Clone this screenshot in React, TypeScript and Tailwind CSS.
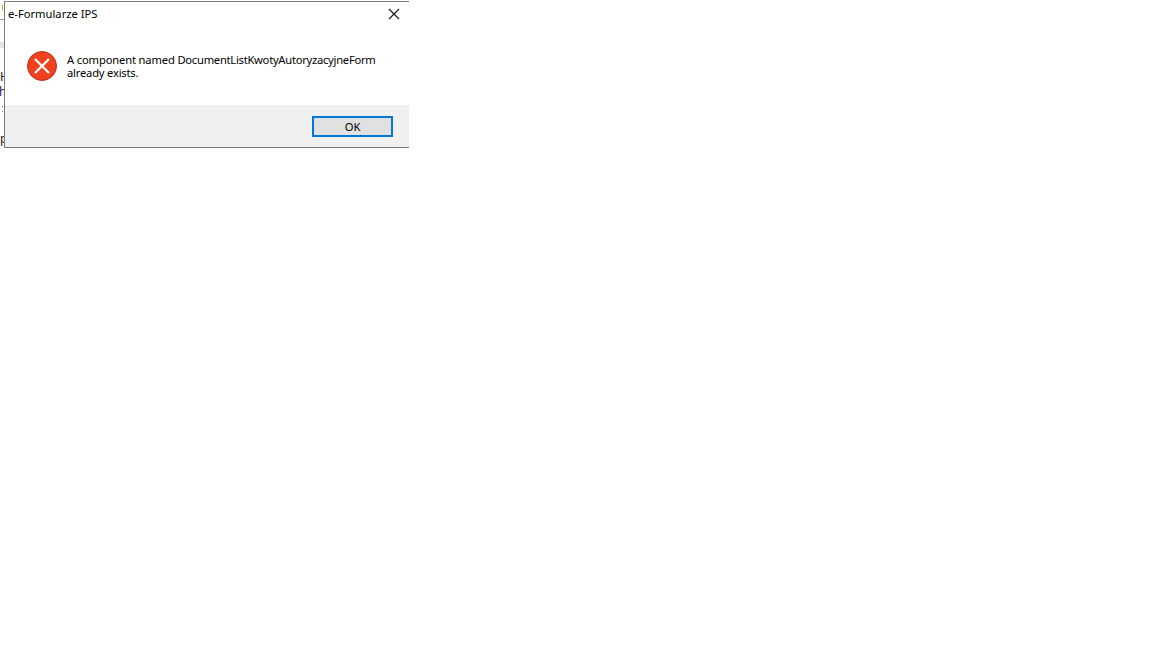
export default function App() {
  return (
    <div className="flex h-[648px] w-full items-start overflow-hidden bg-white font-['Noto_Sans','Open_Sans',sans-serif] text-xs text-black">
      <div className="flex h-[148px] w-[4px] shrink-0 flex-col overflow-hidden">
        <div className="ml-[2px] mt-[5px] h-[5px] w-px bg-[#c8a040]" />
        <div className="mt-[9px] h-px w-full bg-[#a0a0a0]" />
        <div className="mt-[22px] h-[6px] w-full bg-[#e4e4e4]" />
        <div className="mt-[21px] text-xs leading-[15px] text-[#222]">H</div>
        <div className="-ml-px text-xs leading-4 text-[#30105a]">h</div>
        <div className="ml-[2px] mt-[6px] h-px w-px bg-[#5080c0]" />
        <div className="ml-[2px] mt-[4px] h-px w-px bg-[#5080c0]" />
        <div className="mt-[19px] text-xs leading-4 text-[#222]">p</div>
      </div>
      <div className="mt-px flex h-[147px] w-[405px] shrink-0 flex-col border-b border-l border-t border-[#7a7a7a] bg-white">
        <div className="flex h-[24px] items-center justify-between">
          <span className="pl-[3px] text-[11.2px] leading-4">e-Formularze IPS</span>
          <svg width="12" height="12" viewBox="0 0 12 12" className="mr-[9px]" fill="none" stroke="#111" strokeWidth="1.1">
            <path d="M1 1 L11 11 M11 1 L1 11" />
          </svg>
        </div>
        <div className="flex flex-1 items-center gap-[10px] pl-[22px]">
          <svg width="30" height="30" viewBox="0 0 30 30" className="shrink-0">
            <circle cx="15" cy="15" r="14.5" fill="#f0401d" stroke="#a8391f" strokeWidth="1" />
            <path d="M8 8 L22 22 M22 8 L8 22" stroke="#fff" strokeWidth="2.3" />
          </svg>
          <p className="w-[320px] text-[11.2px] leading-[13px]">
            <span className="tracking-[-0.15px]">A component named </span>
            <span className="tracking-[-0.26px]">DocumentListKwotyAutoryzacyjneForm</span>
            <br />
            <span className="tracking-[-0.2px]">already exists.</span>
          </p>
        </div>
        <div className="flex h-[42px] items-center justify-end bg-[#f0f0f0] pr-[16px]">
          <button className="relative h-[21px] w-[81px] border-2 border-[#0078d7] bg-[#e1e1e1] pt-px text-[11.2px] leading-none">
            OK
            <span className="absolute bottom-[-1px] left-[46px] h-px w-px bg-[#222]" />
          </button>
        </div>
      </div>
    </div>
  );
}
